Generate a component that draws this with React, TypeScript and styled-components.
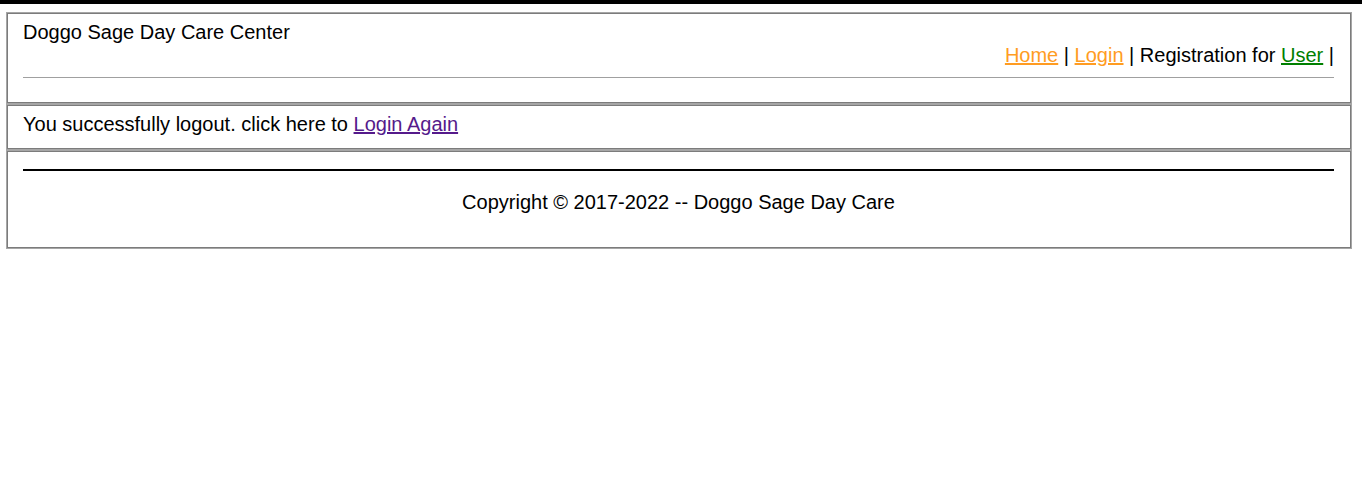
import React from 'react'
import styled, { createGlobalStyle } from 'styled-components'

const GlobalStyle = createGlobalStyle`
  body {
    margin: 0;
    background: #fff;
    font-family: "Liberation Sans", Arial, sans-serif;
    font-size: 20px;
    color: #000;
  }
`

const TopBar = styled.div`
  height: 4px;
  background: #000;
`

const Page = styled.div`
  padding: 8px 10px 0 6px;
`

// two-tone frame: light outer line, darker inner line
const Box = styled.div<{ $top?: number; $bottom?: number }>`
  border: 1px solid #a6a6a6;
  box-shadow: inset 0 0 0 1px #7c7c7c;
  padding: ${(p) => p.$top ?? 8}px 17px ${(p) => p.$bottom ?? 13}px 16px;
  line-height: 23px;
`

const Title = styled.div``

const Nav = styled.nav`
  text-align: right;
`

const NavLink = styled.a<{ $tone: 'orange' | 'green' }>`
  color: ${(p) => (p.$tone === 'green' ? '#008000' : '#ff9c22')};
  text-decoration: underline;
`

const Rule = styled.hr<{ $heavy?: boolean }>`
  border: 0;
  height: ${(p) => (p.$heavy ? '2px' : '1px')};
  background: ${(p) => (p.$heavy ? '#000' : '#a0a0a0')};
  margin: ${(p) => (p.$heavy ? '11px 0 20px' : '10px 0 11px')};
`

const Message = styled.div``

const AgainLink = styled.a`
  color: #551a8b;
  text-decoration: underline;
`

const Copyright = styled.p`
  text-align: center;
  margin: 0 0 20px;
`

export default function App() {
  return (
    <>
      <GlobalStyle />
      <TopBar />
      <Page>
        <Box $bottom={14}>
          <Title>Doggo Sage Day Care Center</Title>
          <Nav>
            <NavLink $tone="orange" href="#">Home</NavLink> |{' '}
            <NavLink $tone="orange" href="#">Login</NavLink> | Registration for{' '}
            <NavLink $tone="green" href="#">User</NavLink> |
          </Nav>
          <Rule />
        </Box>
        <Box>
          <Message>
            You successfully logout. click here to <AgainLink href="#">Login Again</AgainLink>
          </Message>
        </Box>
        <Box $top={7} $bottom={14}>
          <Rule $heavy />
          <Copyright>Copyright © 2017-2022 -- Doggo Sage Day Care</Copyright>
        </Box>
      </Page>
    </>
  )
}
